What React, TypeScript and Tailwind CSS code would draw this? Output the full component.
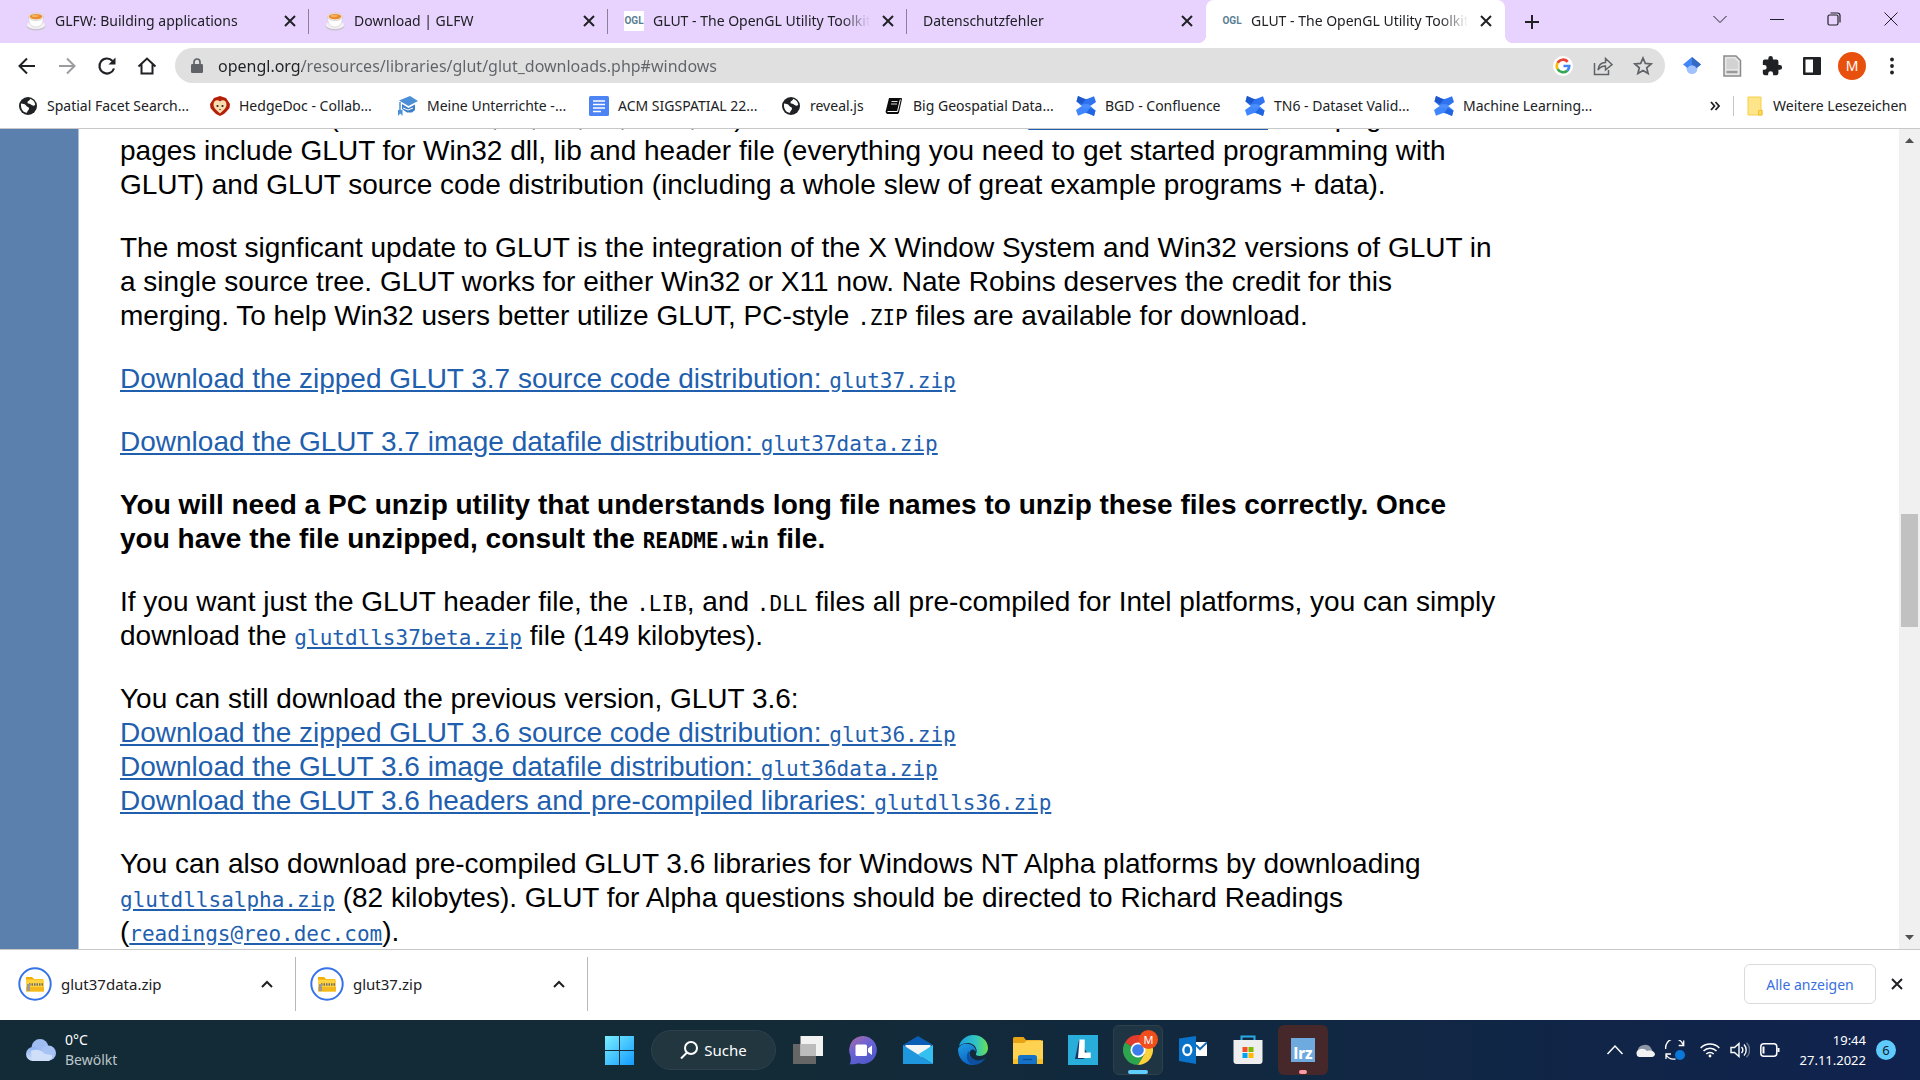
import type { ReactNode } from "react";

const ui = "font-['Noto_Sans','Open_Sans',sans-serif]";

/* ---------- shared glyphs ---------- */

function Close({ className = "size-3" }: { className?: string }) {
  return (
    <svg viewBox="0 0 12 12" className={className} fill="none" stroke="currentColor" strokeWidth="2">
      <path d="M1 1l10 10M11 1L1 11" />
    </svg>
  );
}

function TeaCup() {
  return (
    <svg viewBox="0 0 20 20" className="size-5">
      <ellipse cx="10" cy="15" rx="9.500" ry="4.500" fill="#c9c3cf" />
      <ellipse cx="10" cy="14" rx="9.200" ry="4" fill="#f3f1f4" />
      <path d="M2.500 6c0 6 2.500 10 7.500 10s7.500-4 7.500-10z" fill="#fdfdfd" stroke="#cfc9d4" strokeWidth=".6" />
      <ellipse cx="10" cy="5.800" rx="7.600" ry="3.800" fill="#f2e6dc" stroke="#c8beb8" strokeWidth=".5" />
      <ellipse cx="10" cy="5.600" rx="6.200" ry="2.700" fill="#e98a2b" />
      <ellipse cx="9" cy="5" rx="3.500" ry="1.200" fill="#f3b063" />
    </svg>
  );
}

function Ogl() {
  return (
    <span className="flex size-5 items-center justify-center bg-white font-['Roboto',sans-serif] text-[10px] font-bold text-[#5b8094]">
      OGL
    </span>
  );
}

function Globe() {
  return (
    <svg viewBox="0 0 20 20" className="size-5">
      <circle cx="10" cy="10" r="9" fill="#202124" />
      <path d="M3 7.500c2 .5 4 0 5 2s3 1 3 3-2 2-2 4.300C5 16.500 2.500 13 3 7.500zM12 2.800c3 .8 5 3.200 5.200 6-1.200 1.700-3.200.7-4.200-.3s-3.500-.2-3.500-2 2.800-1.700 2.500-3.700z" fill="#fff" />
    </svg>
  );
}

function HedgeDoc() {
  return (
    <svg viewBox="0 0 20 20" className="size-5">
      <path d="M10 0l3 1 3 1 2 3 2 3-.5 4-2.500 3-3 3-4 2-4-2-3-3L.5 12 0 8l2-3 2-3 3-1z" fill="#b51f08" />
      <path d="M10 5.500C7.500 3 3.500 4.500 3.500 8.500c0 4 4 6.500 6.500 9 2.500-2.500 6.500-5 6.500-9 0-4-4-5.500-6.500-3z" fill="#fbdcae" />
      <circle cx="7.500" cy="10" r="1.100" fill="#222" />
      <circle cx="12.500" cy="10" r="1.100" fill="#222" />
      <path d="M9 13h2l-1 1.300z" fill="#222" />
    </svg>
  );
}

function Courses() {
  return (
    <svg viewBox="0 0 20 20" className="size-5">
      <path d="M1 4.500L12 0l8 5-9.500 5z" fill="#4b8fd6" />
      <path d="M4 8l6.500 4L17 8.500v5.500l-3 2.500H9L4 13z" fill="#3d7fc6" />
      <path d="M5 12l5 2 5-2" stroke="#fff" fill="none" />
      <path d="M2 6v8" stroke="#4b8fd6" strokeWidth="1.500" />
      <path d="M0 14h4.500v6L2.200 17.500 0 20z" fill="#4b8fd6" />
    </svg>
  );
}

function DocsIcon() {
  return (
    <svg viewBox="0 0 20 20" className="size-5">
      <rect width="20" height="20" rx="1.500" fill="#4c83f5" />
      <path d="M4 5h12M4 8.500h12M4 12h12M4 15.500h8" stroke="#fff" strokeWidth="1.600" />
    </svg>
  );
}

function Book() {
  return (
    <svg viewBox="0 0 20 20" className="size-5">
      <path d="M5 2h12.500l.5 1-3 13.500-1 1.500H3L1.500 16z" fill="#0b0b0b" />
      <path d="M3.500 15.500h10l2.800-12" stroke="#fff" strokeWidth="1" fill="none" />
      <path d="M7.500 5.500h6M7 8h6" stroke="#ddd" strokeWidth="1" />
    </svg>
  );
}

function Confluence() {
  return (
    <svg viewBox="0 0 20 20" className="size-5">
      <path d="M2 0l5 2.300c2 1 4 1 6 0L18 .3l2 5.700-5 3.600c-3 1.300-7 1.300-10 0L.5 5.500z" fill="#2f73f0" />
      <path d="M2 0l5 2.300c1 .6 2 .8 3 .8L6 8 .5 5.500z" fill="#1d57cc" />
      <path d="M18 20l-5-2.300c-2-1-4-1-6 0l-5 2L0 14l5-3.600c3-1.300 7-1.300 10 0l4.500 4.100z" fill="#3f86ff" />
      <path d="M18 20l-5-2.300c-1-.6-2-.8-3-.8l4-4.900 5.500 2.500z" fill="#2166e0" />
      <ellipse cx="10" cy="10" rx="4.500" ry="2" fill="#4b8dff" />
    </svg>
  );
}

/* ---------- browser chrome ---------- */

type TabInfo = { icon?: ReactNode; title: string; active?: boolean; divider?: boolean };

const tabs: TabInfo[] = [
  { icon: <TeaCup />, title: "GLFW: Building applications", divider: true },
  { icon: <TeaCup />, title: "Download | GLFW", divider: true },
  { icon: <Ogl />, title: "GLUT - The OpenGL Utility Toolkit", divider: true },
  { title: "Datenschutzfehler" },
  { icon: <Ogl />, title: "GLUT - The OpenGL Utility Toolkit", active: true },
];

function Tab({ icon, title, active, divider }: TabInfo) {
  return (
    <div className={`relative flex h-full w-[299px] min-w-0 shrink items-center pr-[13px] pb-[2px] pl-4 ${active ? "rounded-t-lg bg-white" : ""}`}>
      {active && (
        <>
          <span className="absolute bottom-0 -left-2 size-2 bg-[radial-gradient(circle_at_0_0,transparent_8px,white_8px)]" />
          <span className="absolute -right-2 bottom-0 size-2 bg-[radial-gradient(circle_at_100%_0,transparent_8px,white_8px)]" />
        </>
      )}
      <button className="flex min-w-0 flex-1 items-center gap-[9px] text-left">
        {icon}
        <span className="flex-1 overflow-hidden whitespace-nowrap [mask-image:linear-gradient(to_left,transparent,black_28px)]">{title}</span>
      </button>
      <button aria-label="Tab schließen" className="ml-3 text-[#202124]">
        <Close />
      </button>
      {divider && <span className="absolute top-[9px] right-0 h-[25px] w-px bg-[#8b7f9a]" />}
    </div>
  );
}

function TabStrip() {
  return (
    <header className={`flex h-[43px] bg-[#e8d3ff] pl-[10px] text-[14px] text-[#202124] ${ui}`}>
      <nav aria-label="Tabs" className="flex min-w-0">
        {tabs.map((t, i) => (
          <Tab key={i} {...t} />
        ))}
      </nav>
      <button aria-label="Neuer Tab" className="ml-[19px] self-center">
        <svg viewBox="0 0 16 16" className="size-4" stroke="#202124" strokeWidth="2">
          <path d="M8 1v14M1 8h14" />
        </svg>
      </button>
      <div className="ml-auto flex h-[37px] items-center text-[#202124]">
        <button aria-label="Tabs durchsuchen" className="flex w-[57px] justify-center">
          <svg viewBox="0 0 14 14" className="size-[14px]" fill="none" stroke="currentColor">
            <path d="M.5 4L7 10.500 13.500 4" />
          </svg>
        </button>
        <button aria-label="Minimieren" className="flex w-[57px] justify-center">
          <svg viewBox="0 0 14 14" className="size-[14px]" fill="none" stroke="currentColor">
            <path d="M0 7.500h14" />
          </svg>
        </button>
        <button aria-label="Verkleinern" className="flex w-[57px] justify-center">
          <svg viewBox="0 0 14 14" className="size-[14px]" fill="none" stroke="currentColor" strokeWidth="1.200">
            <rect x="1" y="3" width="10" height="10" rx="1.500" />
            <path d="M3.500 1h7A2.500 2.500 0 0113 3.500v7" />
          </svg>
        </button>
        <button aria-label="Schließen" className="flex w-[58px] justify-center">
          <svg viewBox="0 0 14 14" className="size-[14px]" fill="none" stroke="currentColor">
            <path d="M.5.5l13 13M13.500.5l-13 13" />
          </svg>
        </button>
      </div>
    </header>
  );
}

function NavButton({ label, children }: { label: string; children: ReactNode }) {
  return (
    <button aria-label={label} className="flex size-10 shrink-0 items-center justify-center text-[#202124]">
      {children}
    </button>
  );
}

function Toolbar() {
  return (
    <div className={`flex h-[45px] items-center bg-white pr-2 pl-[7px] ${ui}`}>
      <NavButton label="Zurück">
        <svg viewBox="0 0 20 20" className="size-5" fill="none" stroke="currentColor" strokeWidth="2">
          <path d="M18 10H3M10 2.500L2.500 10l7.500 7.500" />
        </svg>
      </NavButton>
      <NavButton label="Vorwärts">
        <svg viewBox="0 0 20 20" className="size-5" fill="none" stroke="#9b9c9e" strokeWidth="2">
          <path d="M2 10h15M10 2.500l7.500 7.500-7.500 7.500" />
        </svg>
      </NavButton>
      <NavButton label="Neu laden">
        <svg viewBox="0 0 20 20" className="size-5" fill="none" stroke="currentColor" strokeWidth="2.200">
          <path d="M17 12.500A7.500 7.500 0 1115.500 5" />
          <path d="M18.500 1.500v7h-7z" fill="currentColor" stroke="none" />
        </svg>
      </NavButton>
      <NavButton label="Startseite">
        <svg viewBox="0 0 20 20" className="size-5" fill="none" stroke="currentColor" strokeWidth="2">
          <path d="M1.500 10.500L10 2.500l8.500 8M4.500 8.500v9h11v-9" />
        </svg>
      </NavButton>
      <div className="ml-2 flex h-[35px] flex-1 items-center rounded-full bg-[#e0e0e0] pr-3 pl-4">
        <svg viewBox="0 0 12 16" className="h-4 w-3 shrink-0">
          <rect y="6" width="12" height="9" rx="1.200" fill="#5f6368" />
          <path d="M3 6.500V4a3 3 0 016 0v2.500" fill="none" stroke="#5f6368" strokeWidth="1.700" />
        </svg>
        <input
          aria-label="Adresse"
          readOnly
          value="opengl.org/resources/libraries/glut/glut_downloads.php#windows"
          className="ml-[15px] min-w-0 flex-1 bg-[linear-gradient(90deg,#202124_84px,#5f6368_84px)] bg-clip-text text-[16px] text-transparent outline-none"
        />
        <div className="flex items-center gap-5 text-[#5f6368]">
          <button aria-label="Google" className="flex size-5 items-center justify-center rounded-full bg-white">
            <svg viewBox="0 0 18 18" className="size-4" fill="none" strokeWidth="3">
              <path d="M14.300 4.200A7 7 0 003 5.500" stroke="#ea4335" />
              <path d="M3 5.500a7 7 0 000 7" stroke="#fbbc05" />
              <path d="M3 12.500a7 7 0 0011 1.500" stroke="#34a853" />
              <path d="M14 14c1.300-1.300 2-3 2-5H9.500" stroke="#4285f4" />
            </svg>
          </button>
          <button aria-label="Teilen">
            <svg viewBox="0 0 20 20" className="size-5" fill="none" stroke="currentColor" strokeWidth="1.500">
              <path d="M1.500 7v11.500h14V14M5 14c.5-5 3-7.500 7.500-7.500V2.500l6.500 6-6.500 5.500v-4C9 10 7 11 5 14z" />
            </svg>
          </button>
          <button aria-label="Lesezeichen setzen">
            <svg viewBox="0 0 20 20" className="size-5" fill="none" stroke="currentColor" strokeWidth="1.700">
              <path d="M10 2l2.300 5.400 5.900.5-4.500 3.900 1.400 5.700-5.100-3-5.100 3 1.400-5.700-4.500-3.900 5.900-.5z" />
            </svg>
          </button>
        </div>
      </div>
      <div className="ml-[7px] flex">
        <NavButton label="Google Scholar">
          <svg viewBox="0 0 20 20" className="size-5">
            <circle cx="10" cy="12.500" r="5.500" fill="#a0c3ff" />
            <path d="M10 1L1 8.500l4.500 3.500a5 5 0 019 0L19 8.500z" fill="#4285f4" />
            <path d="M10 1v8c2 0 3.700 1.200 4.500 3L19 8.500z" fill="#356ac3" />
          </svg>
        </NavButton>
        <NavButton label="Dokument">
          <svg viewBox="0 0 20 22" className="h-[22px] w-5">
            <path d="M2 1h12l4.500 4.500V21H2z" fill="#e6e6e6" stroke="#8a8a8a" strokeWidth="1.500" />
            <path d="M4.500 3.500h8l3.500 3.500v7H4.500z" fill="#d2d2d2" />
            <path d="M4.500 17h11" stroke="#9a9a9a" strokeWidth="2.500" />
          </svg>
        </NavButton>
        <NavButton label="Erweiterungen">
          <svg viewBox="0 0 24 24" className="size-[22px]" fill="currentColor">
            <path d="M20.500 11H19V7a2 2 0 00-2-2h-4V3.500a2.500 2.500 0 00-5 0V5H4a2 2 0 00-2 2v3.800h1.500a2.700 2.700 0 010 5.400H2V20a2 2 0 002 2h3.800v-1.500a2.700 2.700 0 015.400 0V22H17a2 2 0 002-2v-4h1.500a2.500 2.500 0 000-5z" />
          </svg>
        </NavButton>
        <NavButton label="Seitenleiste">
          <svg viewBox="0 0 18 18" className="size-[18px]">
            <rect width="18" height="18" rx="1" fill="#202124" />
            <rect x="2.500" y="2.500" width="7.500" height="13" fill="#fff" />
          </svg>
        </NavButton>
        <NavButton label="Profil">
          <span className="flex size-7 shrink-0 items-center justify-center rounded-full bg-[#e8500d] text-[14px] text-white">M</span>
        </NavButton>
        <NavButton label="Menü">
          <svg viewBox="0 0 4 18" className="h-[18px] w-1" fill="#202124">
            <circle cx="2" cy="2.500" r="1.900" />
            <circle cx="2" cy="9" r="1.900" />
            <circle cx="2" cy="15.500" r="1.900" />
          </svg>
        </NavButton>
      </div>
    </div>
  );
}

const bookmarks: { icon: ReactNode; label: string; width: string }[] = [
  { icon: <Globe />, label: "Spatial Facet Search...", width: "w-[192px]" },
  { icon: <HedgeDoc />, label: "HedgeDoc - Collab...", width: "w-[188px]" },
  { icon: <Courses />, label: "Meine Unterrichte -...", width: "w-[191px]" },
  { icon: <DocsIcon />, label: "ACM SIGSPATIAL 22...", width: "w-[192px]" },
  { icon: <Globe />, label: "reveal.js", width: "w-[103px]" },
  { icon: <Book />, label: "Big Geospatial Data...", width: "w-[192px]" },
  { icon: <Confluence />, label: "BGD - Confluence", width: "w-[169px]" },
  { icon: <Confluence />, label: "TN6 - Dataset Valid...", width: "w-[189px]" },
  { icon: <Confluence />, label: "Machine Learning...", width: "w-[180px]" },
];

function Bookmarks() {
  return (
    <nav aria-label="Lesezeichen" className={`flex h-[41px] items-center border-b border-[#c8c8c8] bg-white pr-[13px] pb-[5px] pl-[18px] text-[14px] text-[#202124] ${ui}`}>
      {bookmarks.map((b) => (
        <a key={b.label} href="#bookmark" className={`flex shrink-0 items-center gap-[9px] whitespace-nowrap ${b.width}`}>
          {b.icon}
          {b.label}
        </a>
      ))}
      <button aria-label="Weitere anzeigen" className="ml-auto">
        <svg viewBox="0 0 10 10" className="size-[10px]" fill="none" stroke="#202124" strokeWidth="1.800">
          <path d="M1 1l3.500 4L1 9M5.500 1L9 5 5.500 9" />
        </svg>
      </button>
      <span className="mx-[13px] h-5 w-px bg-[#c4c4c4]" />
      <button className="flex items-center gap-[10px]">
        <svg viewBox="0 0 16 20" className="h-5 w-4">
          <path d="M1 1h13v13h1v5H1z" fill="#ffe58a" stroke="#f5cf4c" />
          <path d="M11.500 19v-4.500h3.500V19z" fill="#ffd95a" stroke="#f0c136" />
        </svg>
        Weitere Lesezeichen
      </button>
    </nav>
  );
}

/* ---------- page ---------- */

function Code({ children }: { children: ReactNode }) {
  return <code className="font-['DejaVu_Sans_Mono',monospace] text-[21px] leading-none">{children}</code>;
}

function Link({ children }: { children: ReactNode }) {
  return (
    <a href="#download" className="text-[#1f5fae] underline">
      {children}
    </a>
  );
}

function Page() {
  return (
    <div className="flex min-h-0 flex-1 bg-white">
      <div className="w-[79px] shrink-0 border-r border-[#a9bfdb] bg-[#5b80ad]" />
      <main className="flex min-w-0 flex-1 flex-col overflow-hidden pl-[41px] font-['Liberation_Sans',Arial,sans-serif] text-[28px] leading-[34px] text-black">
        <div className="-mt-[29px] flex max-w-[1380px] flex-col gap-[29px]">
          <p>
            GLUT for Win32 (Windows 95,98,Me,NT,2000,XP). It is all available from <Link>Nate Robins server</Link> web page. The
            <br />
            pages include GLUT for Win32 dll, lib and header file (everything you need to get started programming with GLUT) and GLUT
            source code distribution (including a whole slew of great example programs + data).
          </p>
          <p>
            The most signficant update to GLUT is the integration of the X Window System and Win32 versions of GLUT in a single source
            tree. GLUT works for either Win32 or X11 now. Nate Robins deserves the credit for this
            <br />
            merging. To help Win32 users better utilize GLUT, PC-style <Code>.ZIP</Code> files are available for download.
          </p>
          <p>
            <Link>
              Download the zipped GLUT 3.7 source code distribution: <Code>glut37.zip</Code>
            </Link>
          </p>
          <p>
            <Link>
              Download the GLUT 3.7 image datafile distribution: <Code>glut37data.zip</Code>
            </Link>
          </p>
          <p className="font-bold">
            You will need a PC unzip utility that understands long file names to unzip these files correctly. Once you have the file
            unzipped, consult the <Code>README.win</Code> file.
          </p>
          <p>
            If you want just the GLUT header file, the <Code>.LIB</Code>, and <Code>.DLL</Code> files all pre-compiled for Intel
            platforms, you can simply download the{" "}
            <Link>
              <Code>glutdlls37beta.zip</Code>
            </Link>{" "}
            file (149 kilobytes).
          </p>
          <p>
            You can still download the previous version, GLUT 3.6:
            <br />
            <Link>
              Download the zipped GLUT 3.6 source code distribution: <Code>glut36.zip</Code>
            </Link>
            <br />
            <Link>
              Download the GLUT 3.6 image datafile distribution: <Code>glut36data.zip</Code>
            </Link>
            <br />
            <Link>
              Download the GLUT 3.6 headers and pre-compiled libraries: <Code>glutdlls36.zip</Code>
            </Link>
          </p>
          <p>
            You can also download pre-compiled GLUT 3.6 libraries for Windows NT Alpha platforms by downloading{" "}
            <Link>
              <Code>glutdllsalpha.zip</Code>
            </Link>{" "}
            (82 kilobytes). GLUT for Alpha questions should be directed to Richard Readings (
            <Link>
              <Code>readings@reo.dec.com</Code>
            </Link>
            ).
          </p>
        </div>
      </main>
      <div className="flex w-[21px] shrink-0 flex-col items-center justify-between bg-[#f0f0f0] py-[9px]">
        <svg viewBox="0 0 9 5" className="h-[5px] w-[9px]" fill="#505050">
          <path d="M4.500 0L9 5H0z" />
        </svg>
        <div className="flex w-full flex-1 flex-col items-center">
          <div className="flex-[371]" />
          <div className="w-[17px] flex-[114] bg-[#c1c1c1]" />
          <div className="flex-[308]" />
        </div>
        <svg viewBox="0 0 9 5" className="h-[5px] w-[9px]" fill="#505050">
          <path d="M4.500 5L9 0H0z" />
        </svg>
      </div>
    </div>
  );
}

/* ---------- downloads ---------- */

function DownloadItem({ name }: { name: string }) {
  return (
    <div className="flex h-[54px] w-[292px] items-center border-r border-[#b8b8b8] pr-[22px] pl-[14px]">
      <button className="flex flex-1 items-center gap-[9px] text-left">
        <svg viewBox="0 0 34 34" className="size-[34px]">
          <circle cx="17" cy="17" r="15.700" fill="#fff" stroke="#3673e8" strokeWidth="2" />
          <path d="M8 10h6l2 2h9v2H8z" fill="#f3ae00" />
          <rect x="8" y="12.500" width="18" height="12" rx=".8" fill="#ffd23f" />
          <path d="M8 20h18v4.500H8z" fill="#f5b81c" />
          <path d="M11 17.500h15" stroke="#6f6f6f" strokeWidth="2.500" strokeDasharray="1.500 1" />
          <path d="M9 17h3v7H9z" fill="#9a9a9a" />
        </svg>
        {name}
      </button>
      <button aria-label={`Optionen ${name}`}>
        <svg viewBox="0 0 12 8" className="h-2 w-3" fill="none" stroke="#202124" strokeWidth="2">
          <path d="M1 7l5-5 5 5" />
        </svg>
      </button>
    </div>
  );
}

function Downloads() {
  return (
    <div className={`flex h-[71px] items-center border-t border-[#c8c8c8] bg-white pr-[17px] pb-[2px] pl-1 text-[15px] text-[#202124] ${ui}`}>
      <div className="flex">
        <DownloadItem name="glut37data.zip" />
        <DownloadItem name="glut37.zip" />
      </div>
      <button className="ml-auto h-10 w-[132px] rounded-md border border-[#d8dade] text-[14px] text-[#3a6fe0]">Alle anzeigen</button>
      <button aria-label="Leiste schließen" className="ml-[15px]">
        <Close />
      </button>
    </div>
  );
}

/* ---------- taskbar ---------- */

function TaskButton({ label, tile = "", children }: { label: string; tile?: string; children: ReactNode }) {
  return (
    <button aria-label={label} className={`relative flex size-[50px] items-center justify-center rounded-md ${tile}`}>
      {children}
    </button>
  );
}

function Taskbar() {
  return (
    <footer className={`grid h-[60px] shrink-0 grid-cols-[1fr_auto_1fr] items-center bg-linear-to-r from-[#132b36] from-40% to-[#10224e] text-white ${ui}`}>
      <button className="flex items-center gap-[9px] pl-[26px] text-left text-[14px] leading-5">
        <svg viewBox="0 0 30 22" className="h-[22px] w-[30px]">
          <defs>
            <linearGradient id="cloud" x2="0" y2="1">
              <stop stopColor="#8db2f0" />
              <stop offset="1" stopColor="#d3e2fb" />
            </linearGradient>
          </defs>
          <circle cx="14" cy="8.500" r="8.500" fill="#9fbdf3" />
          <circle cx="7" cy="15" r="7" fill="url(#cloud)" />
          <circle cx="22.500" cy="14" r="7.500" fill="#a7c3f5" />
          <path d="M5 12c6-3 11 0 14 3l7 1v3l-3 3H6z" fill="#cfdffa" />
        </svg>
        <span>
          0°C
          <br />
          <span className="text-[#bcc5ca]">Bewölkt</span>
        </span>
      </button>
      <div className="flex items-center gap-[5px] pl-[2px]">
        <TaskButton label="Start">
          <svg viewBox="0 0 29 29" className="size-[29px]">
            <defs>
              <linearGradient id="win" x2="1" y2="1">
                <stop stopColor="#7aefff" />
                <stop offset="1" stopColor="#129bff" />
              </linearGradient>
            </defs>
            <path d="M0 0h14v14H0zM15 0h14v14H15zM0 15h14v14H0zM15 15h14v14H15z" fill="url(#win)" />
          </svg>
        </TaskButton>
        <button className="mx-[2px] flex h-10 w-[125px] items-center justify-center gap-[6px] rounded-full border border-[#2d414d] bg-[#223640] text-[15px]">
          <svg viewBox="0 0 18 18" className="size-[18px]" fill="none" stroke="#fff" strokeWidth="2">
            <circle cx="11" cy="7" r="6" />
            <path d="M7 11.500L1 17.500" />
          </svg>
          Suche
        </button>
        <TaskButton label="Taskansicht">
          <svg viewBox="0 0 30 28" className="h-7 w-[30px]">
            <rect y="8" width="23" height="20" fill="#666" />
            <rect x="7.500" width="22.500" height="20" fill="#f2f2f2" />
            <rect x="7.500" y="8" width="15.500" height="12" fill="#bcbcbc" />
          </svg>
        </TaskButton>
        <TaskButton label="Chat">
          <svg viewBox="0 0 29 29" className="size-[29px]">
            <defs>
              <linearGradient id="chat" x2=".6" y2="1">
                <stop stopColor="#b0689f" />
                <stop offset=".5" stopColor="#6864d6" />
                <stop offset="1" stopColor="#5059c9" />
              </linearGradient>
            </defs>
            <path d="M14.500 0a14 14 0 11-5 27.300C6 28.500 3 28.500.5 28.200 2 26 2 24 1.500 20A14 14 0 0114.500 0z" fill="url(#chat)" />
            <rect x="6.500" y="8.500" width="11.500" height="11.500" rx="1.500" fill="#fff" />
            <path d="M19 12.500l4-3v9.500l-4-3z" fill="#fff" />
          </svg>
        </TaskButton>
        <TaskButton label="Mail">
          <svg viewBox="0 0 30 28" className="h-7 w-[30px]">
            <path d="M0 9L15 0l15 9v4H0z" fill="#0a5cb5" />
            <path d="M2.500 9h25v8l-12 5-13-5z" fill="#f4f4f4" />
            <path d="M0 9l15 9.500L30 28H0z" fill="#1f97de" />
            <path d="M30 9v19L15 18.500z" fill="#35c0f2" />
          </svg>
        </TaskButton>
        <TaskButton label="Edge">
          <svg viewBox="0 0 30 30" className="size-[30px]">
            <defs>
              <linearGradient id="edgeA" x2="1">
                <stop stopColor="#1a9fe0" />
                <stop offset=".6" stopColor="#33c6c0" />
                <stop offset="1" stopColor="#6be04d" />
              </linearGradient>
              <linearGradient id="edgeB" x2=".4" y2="1">
                <stop stopColor="#1fa0e6" />
                <stop offset="1" stopColor="#0d63c4" />
              </linearGradient>
            </defs>
            <path d="M1 11C3 4 9 0 15 0c9 0 15 6 15 13 0 5-4 8-8.500 8-3 0-4-1.200-3.500-2.200C20 16 18 9 11 8 7 7.500 3 9 1 11z" fill="url(#edgeA)" />
            <path d="M0 14c2-5 7-6 11-5 4 .8 7 4 7 8-1-2-3-3-4.500-2-4 2-2 9 6 11l-3 3.800C7 31 0 24 0 14z" fill="url(#edgeB)" />
            <path d="M11 16c-1 6 4 9.500 9 9.500 3 0 5-1 7.500-2.500C25 27 21 30 15.500 30 9 29 7 20 11 16z" fill="#0c4f9e" />
          </svg>
        </TaskButton>
        <TaskButton label="Explorer">
          <svg viewBox="0 0 30 27" className="h-[27px] w-[30px]">
            <path d="M0 1.500Q0 0 1.500 0h9L13 3h15v8H0z" fill="#e6a313" />
            <path d="M0 6h11l3-2.500h16V27H0z" fill="#ffd251" />
            <path d="M0 22h30v5H0z" fill="#fbbf24" />
            <path d="M5 27v-6.500a2.500 2.500 0 012.500-2.500h14a2.500 2.500 0 012.500 2.500V27z" fill="#1473c9" />
            <path d="M10 22.500h9" stroke="#0d4d93" strokeWidth="1.200" />
          </svg>
        </TaskButton>
        <TaskButton label="L">
          <svg viewBox="0 0 30 30" className="size-[30px]">
            <rect width="30" height="30" fill="#29aedb" />
            <path d="M11 5l-4 19h8l6-3z" fill="#173766" />
            <path d="M11.500 4.500h5.200v13h6V23H10z" fill="#fff" />
          </svg>
        </TaskButton>
        <TaskButton label="Chrome" tile="border border-[#2d414d] bg-[#203543]">
          <svg viewBox="0 0 30 30" className="size-[30px]">
            <path d="M15 15L2 7.500A15 15 0 0128 7.500z" fill="#e33b2e" />
            <path d="M2 7.500A15 15 0 0015 30l6.500-11.200L15 15z" fill="#2da44e" />
            <path d="M15 8h13.300A15 15 0 0115 30l6.500-11z" fill="#fdd23a" />
            <circle cx="15" cy="15" r="7.500" fill="#fff" />
            <circle cx="15" cy="15" r="5.800" fill="#3b7ded" />
          </svg>
          <span className="absolute top-1 right-1 flex size-[19px] items-center justify-center rounded-full bg-[#f04e1c] text-[11px] leading-none">M</span>
          <span className="absolute bottom-0 h-1 w-5 rounded-full bg-[#60cdff]" />
        </TaskButton>
        <TaskButton label="Outlook">
          <svg viewBox="0 0 28 28" className="size-7">
            <path d="M16 6h12v14H16z" fill="#fff" />
            <path d="M17 9l4 4 7-6.500" stroke="#1569b5" strokeWidth="2" fill="none" />
            <path d="M0 2.500L17 0v28L0 25z" fill="#0a72c8" />
            <ellipse cx="8.300" cy="14" rx="4" ry="5" fill="none" stroke="#fff" strokeWidth="2.300" />
          </svg>
        </TaskButton>
        <TaskButton label="Store">
          <svg viewBox="0 0 30 30" className="size-[30px]">
            <path d="M8.500 6V1.500h13V6" fill="none" stroke="#29a9e8" strokeWidth="2" />
            <path d="M.5 5h29v21a3 3 0 01-3 3h-23a3 3 0 01-3-3z" fill="#eeeeee" />
            <path d="M9.500 12h5v5h-5z" fill="#f25022" />
            <path d="M15.500 12h5v5h-5z" fill="#7fba00" />
            <path d="M9.500 18h5v5h-5z" fill="#00a4ef" />
            <path d="M15.500 18h5v5h-5z" fill="#ffb900" />
          </svg>
        </TaskButton>
        <TaskButton label="LRZ" tile="bg-[#46282b]">
          <span className="flex size-6 items-end justify-center bg-[#6faadf] text-[15px] leading-[18px] font-extrabold">lrz</span>
          <span className="absolute bottom-px h-1 w-2 rounded-full bg-[#ff99a4]" />
        </TaskButton>
      </div>
      <div className="flex items-center justify-end pr-6">
        <button aria-label="Ausgeblendete Symbole" className="mr-[11px]">
          <svg viewBox="0 0 18 18" className="size-[18px]" fill="none" stroke="#fff" strokeWidth="1.500">
            <path d="M1.500 13L9 5l7.500 8" />
          </svg>
        </button>
        <svg viewBox="0 0 20 14" className="h-[14px] w-5">
          <path d="M3 9a7 6 0 0113-4l2 4z" fill="#8b95a3" />
          <path d="M4 14a4 4 0 010-7.500c3-1.500 6-.5 8 1.500 4-1.500 8 .5 8 3.500a3 3 0 01-3 2.500z" fill="#f2f2f2" />
        </svg>
        <svg viewBox="0 0 20 20" className="ml-[10px] size-5" fill="none" stroke="#fff" strokeWidth="1.300">
          <path d="M.7 9A9 9 0 0118 4.500M18.700.5v5h-5M1 19v-5h5M1 14.500a9 9 0 009.500 4.500" />
          <circle cx="15" cy="15" r="5" fill="#0a78d8" stroke="none" />
        </svg>
        <button aria-label="Netzwerk, Lautstärke, Akku" className="ml-[15px] flex items-center gap-[10px]">
          <svg viewBox="0 0 20 16" className="h-4 w-5" fill="none" stroke="#fff" strokeWidth="1.500">
            <path d="M.7 6a13 13 0 0118.600 0M3.500 9a9 9 0 0113 0M6.300 12a5.200 5.200 0 017.400 0" />
            <circle cx="10" cy="14" r="1.400" fill="#fff" stroke="none" />
          </svg>
          <svg viewBox="0 0 20 16" className="h-4 w-5" fill="none" stroke="#fff" strokeWidth="1.400">
            <path d="M1 5.500h3.500L9 1.500v13l-4.500-4H1z" />
            <path d="M11.500 5a4.500 4.500 0 010 6M14 2.500a8 8 0 010 11" />
            <path d="M16.500.8a10 10 0 010 14.400" stroke="#64748b" />
          </svg>
          <svg viewBox="0 0 20 14" className="h-[14px] w-5" fill="none" stroke="#fff" strokeWidth="1.500">
            <rect x=".8" y=".8" width="16" height="12.400" rx="3" />
            <path d="M18.500 5v4" strokeWidth="2" />
            <path d="M3.500 3.500v7" strokeWidth="2" />
          </svg>
        </button>
        <button className="ml-5 flex items-center gap-[10px] text-right text-[13px] leading-5">
          <span>
            19:44
            <br />
            27.11.2022
          </span>
          <span className="flex size-5 items-center justify-center rounded-full bg-[#5fcbfd] text-[#10202c]">6</span>
        </button>
      </div>
    </footer>
  );
}

export default function App() {
  return (
    <div className="flex h-screen flex-col overflow-hidden bg-white">
      <TabStrip />
      <Toolbar />
      <Bookmarks />
      <Page />
      <Downloads />
      <Taskbar />
    </div>
  );
}
